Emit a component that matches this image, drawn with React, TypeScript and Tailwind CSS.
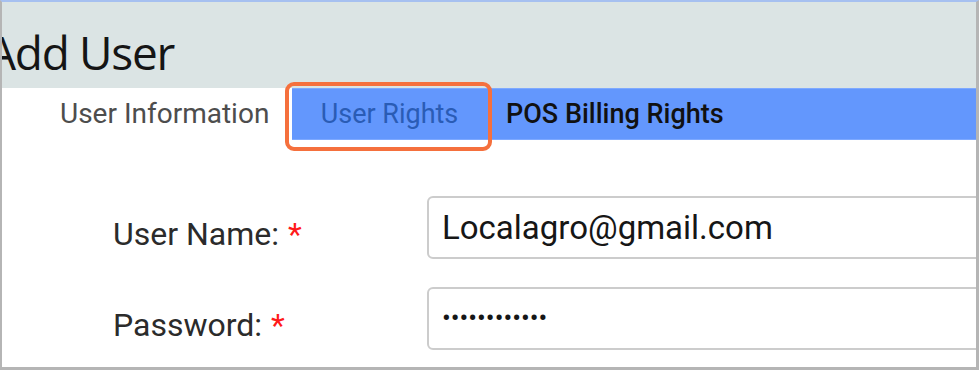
import React from 'react';

const roboto = { fontFamily: 'Roboto, "Liberation Sans", sans-serif' };

const FormRow: React.FC<{ label: string; value: string; masked?: boolean }> = ({ label, value, masked }) => (
  <div className="flex items-center">
    <div className="w-[425px] shrink-0 pl-[111px] pt-[12px] text-[32px] leading-normal text-[#2b2b2b] whitespace-nowrap">
      {label}
      <span className="ml-[9px] text-[#ff1a1a]">*</span>
    </div>
    <div
      className={
        'h-[63px] w-[580px] shrink-0 flex items-center pl-[13px] rounded-[6px] border-2 border-[#cccccc] bg-white text-[#161616] ' +
        (masked ? 'text-[26px]' : 'text-[33px]')
      }
    >
      {value}
    </div>
  </div>
);

export default function App() {
  return (
    <div
      className="w-[979px] h-[370px] overflow-hidden bg-white border-l-2 border-r-[3px] border-b-[3px] border-[#b5b5b5] border-t-2 border-t-[#a6c0f0]"
      style={roboto}
    >
      {/* Header */}
      <header className="h-[86px] bg-[#dbe4e4] overflow-hidden">
        <h1
          className="-ml-[15px] pt-[27px] text-[46px] leading-none tracking-[-1.3px] font-normal text-[#151515] whitespace-nowrap"
          style={{ fontFamily: '"Open Sans", "Noto Sans", sans-serif' }}
        >
          Add User
        </h1>
      </header>

      {/* Tabs */}
      <nav className="flex h-[52px] text-[27px] whitespace-nowrap">
        <div className="w-[290px] shrink-0 flex items-center pl-[58px] text-[28px] text-[#4d4d4d]">User Information</div>
        <div className="flex-1 flex bg-[#6397fd] border-y border-[#7ea9ff]">
          <div className="relative w-[195px] shrink-0 flex items-center justify-center text-[#2a5cb5]">
            User Rights
            <span className="pointer-events-none absolute -left-[7px] -top-[7px] -right-[5px] -bottom-[12px] rounded-[9px] border-[4px] border-[#f5703d]" />
          </div>
          <div className="flex items-center pl-[19px] font-medium text-[#111111]">POS Billing Rights</div>
        </div>
      </nav>

      {/* Form */}
      <main className="pt-[56px] flex flex-col gap-[28px]">
        <FormRow label="User Name:" value="Localagro@gmail.com" />
        <FormRow label="Password:" value="••••••••••••" masked />
      </main>
    </div>
  );
}
